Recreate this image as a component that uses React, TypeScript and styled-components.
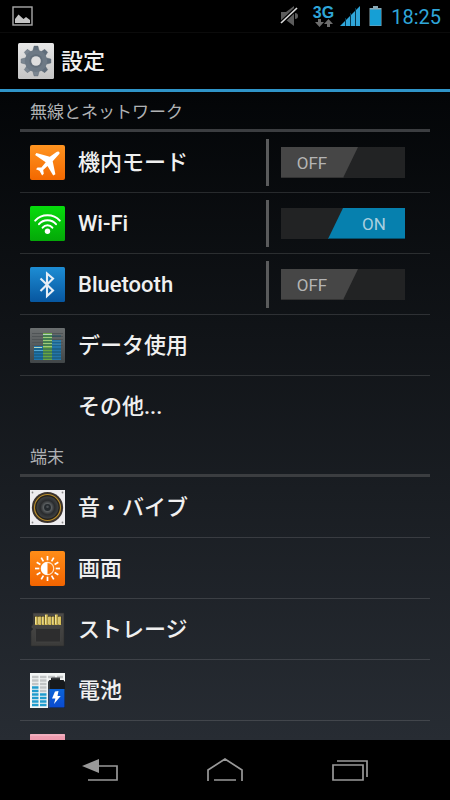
import React, { useState } from "react";
import styled, { createGlobalStyle } from "styled-components";

const BLUE = "#2fa6d9";

const GlobalStyle = createGlobalStyle`
  *, *::before, *::after { box-sizing: border-box; }
  body {
    margin: 0;
    background: #000;
    color: #f0f0f0;
    font-family: Roboto, "Noto Sans CJK JP", sans-serif;
  }
`;

const Screen = styled.div`
  display: flex;
  flex-direction: column;
  height: 100vh;
  overflow: hidden;
  background: linear-gradient(#000, #030507 90px, #272c33 740px);
`;

const StatusBar = styled.div`
  display: flex;
  flex: none;
  align-items: center;
  justify-content: space-between;
  height: 32px;
  padding: 0 9px 0 12px;
  background: #000;
`;

const StatusIcons = styled.div`
  display: flex;
  align-items: center;
`;

const StatusIcon = styled.svg<{ $gap?: number }>`
  display: block;
  margin-right: ${(p) => p.$gap ?? 0}px;
`;

const Network = styled.div`
  display: flex;
  flex-direction: column;
  align-items: center;
  margin-right: 6px;
  color: ${BLUE};
  font: bold 16px/13px "Liberation Sans", sans-serif;
`;

const Clock = styled.time`
  color: ${BLUE};
  font-size: 20px;
  line-height: 32px;
  padding-top: 1px;
`;

const Header = styled.header`
  display: flex;
  flex: none;
  align-items: center;
  gap: 7px;
  height: 60px;
  padding: 0 18px;
  background: #000;
  border-top: 1px solid #0b0b0b;
  border-bottom: 3px solid #2f94c8;
`;

const Title = styled.h1`
  margin: 0;
  padding-top: 2px;
  font-size: 22px;
  font-weight: 500;
  line-height: 32px;
`;

const List = styled.main`
  flex: 1;
  min-height: 0;
  overflow: hidden;
  padding: 0 20px;
`;

const SectionTitle = styled.h2`
  height: 40px;
  margin: 0;
  padding-left: 10px;
  border-bottom: 3px solid #3b3d40;
  color: #b0b2b4;
  font-size: 17px;
  font-weight: 400;
  line-height: 41px;
`;

const Row = styled.div`
  display: flex;
  align-items: center;
  height: 61px;
  padding: 1px 25px 0 10px;
  border-bottom: 1px solid rgba(255, 255, 255, 0.13);

  &:last-child { border-bottom-color: transparent; }
`;

const IconSlot = styled.div`
  flex: none;
  width: 35px;
  height: 35px;
  margin-right: 13px;

  svg { display: block; }
`;

const Label = styled.span`
  flex: 1;
  font-size: 22px;
  font-weight: 500;
  line-height: 32px;
  white-space: nowrap;
`;

const ToggleArea = styled.div`
  display: flex;
  flex: none;
  align-items: center;
  height: 47px;
  padding-left: 12px;
  border-left: 3px solid #5a5b5c;
`;

const Track = styled.button`
  display: block;
  width: 124px;
  height: 31px;
  padding: 0;
  border: 0;
  background: #222324;
  cursor: pointer;
`;

const Thumb = styled.span<{ $on: boolean }>`
  display: block;
  width: 77px;
  height: 31px;
  margin-left: ${(p) => (p.$on ? "auto" : "0")};
  padding: ${(p) => (p.$on ? "0 0 0 15px" : "0 15px 0 0")};
  border-bottom: 1px solid ${(p) => (p.$on ? "#05506d" : "#333")};
  background: ${(p) => (p.$on ? "#0680ae" : "#464646")};
  clip-path: ${(p) =>
    p.$on
      ? "polygon(15px 0, 100% 0, 100% 100%, 0 100%)"
      : "polygon(0 0, 100% 0, 62px 100%, 0 100%)"};
  color: ${(p) => (p.$on ? "#a9cfdf" : "#b4b4b4")};
  font: 17px/32px Roboto, sans-serif;
  text-align: center;
`;

const NavBar = styled.nav`
  display: flex;
  flex: none;
  justify-content: center;
  height: 60px;
  background: #000;
`;

const NavButton = styled.button`
  display: flex;
  align-items: center;
  justify-content: center;
  flex: 0 1 125px;
  padding: 0;
  border: 0;
  background: none;
  cursor: pointer;
`;

function AppIcon({ children, size = 35 }: { children: React.ReactNode; size?: number }) {
  return (
    <svg width={size} height={size} viewBox="0 0 35 35" aria-hidden="true">
      {children}
    </svg>
  );
}

function Gradient({ id, from, to }: { id: string; from: string; to: string }) {
  return (
    <defs>
      <linearGradient id={id} x1="0" y1="0" x2="0" y2="1">
        <stop offset="0" stopColor={from} />
        <stop offset="1" stopColor={to} />
      </linearGradient>
    </defs>
  );
}

const GearIcon = () => (
  <AppIcon size={36}>
    <Gradient id="gearBg" from="#e8e8e8" to="#c4c4c4" />
    <Gradient id="gearFg" from="#5d6b79" to="#7d8893" />
    <rect width="35" height="35" rx="1.5" fill="url(#gearBg)" />
    <g fill="url(#gearFg)" stroke="#56616c" strokeWidth=".4">
      {[0, 45, 90, 135].map((a) => (
        <path
          key={a}
          transform={`rotate(${a} 17.5 17.5)`}
          d={a % 90 === 0
            ? "M15.6 3h3.8l1.3 5v19l-1.3 5h-3.8l-1.3-5V8z"
            : "M15.5 3.5h4l1 4.500v19l-1 4.500h-4l-1-4.500V8z"}
        />
      ))}
    </g>
    <circle cx="17.5" cy="17.5" r="10.8" fill="#6d7985" />
    <circle cx="17.5" cy="17.5" r="6.5" fill="#626e7a" />
    <circle cx="17.5" cy="17.5" r="4.7" fill="#dedede" />
  </AppIcon>
);

const AirplaneIcon = () => (
  <AppIcon>
    <Gradient id="plane" from="#ff9420" to="#f36800" />
    <rect width="35" height="35" rx="2" fill="url(#plane)" />
    <path
      fill="#fff"
      d="M28.800 6.700c1 .5 1 1.700.2 2.600l-6.300 6.900 2.700 13-2.200 1.200-5.700-9.400-4.300 4.100.6 3.700-1.700 1.700-2.600-4.800-3.500-1.500 1.500-1.800 3.900.1 4.300-5.200L5.100 10l1.300-2.100 13.400 3.800 6.700-4.700c.8-.6 1.600-.7 2.300-.3z"
    />
  </AppIcon>
);

const WifiIcon = () => (
  <AppIcon>
    <Gradient id="wifi" from="#06dc0c" to="#04a808" />
    <rect width="35" height="35" rx="1.5" fill="url(#wifi)" />
    <g fill="none" stroke="#fff" strokeWidth="2" strokeLinecap="round">
      <path d="M5.200 14.6C11.5 7.600 23.5 7.600 29.800 14.6" />
      <path d="M9 18.2C13.200 13 21.800 13 26 18.2" />
      <path d="M12.6 21.6C15.2 18.3 19.8 18.3 22.4 21.6" />
    </g>
    <circle cx="17.5" cy="25.3" r="2.7" fill="#fff" />
  </AppIcon>
);

const BluetoothIcon = () => (
  <AppIcon>
    <Gradient id="bt" from="#1d8dd4" to="#07569f" />
    <rect width="35" height="35" rx="1.5" fill="url(#bt)" />
    <path d="M10.5 11.5 23 23.5l-6 5.5V6.5l6 5L10.5 24" fill="none" stroke="#e6eef6" strokeWidth="2.1" />
  </AppIcon>
);

const DataIcon = () => (
  <AppIcon>
    <Gradient id="data" from="#6b6f70" to="#414648" />
    <rect width="35" height="35" rx="1" fill="url(#data)" />
    <path d="M2 5.5h31M2 8.5h31M2 11.5h31M2 14.5h31M2 17.5h31" stroke="#4f5456" strokeWidth="1" />
    <rect x="4" y="18" width="9" height="14" fill="#1d73ad" />
    <rect x="13" y="5" width="9" height="27" fill="#69a642" />
    <rect x="22" y="12" width="9" height="20" fill="#2475a9" />
    <path d="M4 19.5h8M13 6.5h9" stroke="#b4d5bb" />
    <path d="M22 13.5h9M4 22.5h9M22 16.5h9" stroke="#56a8d3" />
    <path d="M13 9.5h9M13 12.5h9M13 15.5h9M13 18.5h9" stroke="#9fca78" />
    <path d="M4 21h27M4 24h27M4 27h27M4 30h27M13 8h18M13 11h9M13 14h18M13 17h18" stroke="#174e65" strokeWidth=".9" />
  </AppIcon>
);

const SpeakerIcon = () => (
  <AppIcon>
    <defs>
      <radialGradient id="cone">
        <stop offset="0" stopColor="#171b1e" />
        <stop offset=".35" stopColor="#5d6163" />
        <stop offset=".65" stopColor="#292b2d" />
        <stop offset="1" stopColor="#3f4244" />
      </radialGradient>
    </defs>
    <rect width="35" height="35" fill="#eeedf0" />
    <circle cx="17.5" cy="17.5" r="15.600" fill="#3b332e" />
    <circle cx="17.5" cy="17.5" r="13" fill="#25211c" stroke="#b58b2b" strokeWidth="1.200" />
    <circle cx="17.5" cy="17.5" r="11" fill="url(#cone)" />
    <circle cx="17.5" cy="17.5" r="3.4" fill="#252a2e" />
    <circle cx="17.5" cy="16.8" r="1.3" fill="#4c5054" />
    <g fill="#888">
      <circle cx="2.5" cy="2.5" r=".9" />
      <circle cx="32.5" cy="2.5" r=".9" />
      <circle cx="2.5" cy="32.5" r=".9" />
      <circle cx="32.5" cy="32.5" r=".9" />
    </g>
  </AppIcon>
);

const BrightnessIcon = () => (
  <AppIcon>
    <Gradient id="sun" from="#ff8d18" to="#f26400" />
    <rect width="35" height="35" rx="2" fill="url(#sun)" />
    <circle cx="17.5" cy="17.5" r="6.2" fill="none" stroke="#ffe1c2" strokeWidth="1.2" />
    <path d="M17.5 11a6.5 6.5 0 0 0 0 13z" fill="#fff" />
    {Array.from({ length: 12 }, (_, i) => (
      <path key={i} d="M17.5 5v4.3" transform={`rotate(${i * 30} 17.5 17.5)`} stroke="#fff" strokeWidth="1.7" />
    ))}
  </AppIcon>
);

const StorageIcon = () => (
  <AppIcon>
    <Gradient id="sd" from="#4c4b49" to="#3b3b3a" />
    <path d="M3 1h31v33H1V19l2-2-2-2 2-3z" fill="url(#sd)" stroke="#2b2b2b" strokeWidth=".6" />
    <path d="M4.5 4h27v8h-27z" fill="#2f2b21" />
    <g fill="#d4bb55">
      <path d="M5 4.5h2.7V13H5zM8.3 4.5H11V13H8.3zM11.7 4.5h2.7V13h-2.7zM15 2.5h2.7V13H15zM18.3 4.5H21V13h-2.7zM21.7 4.5h2.7V13h-2.7zM25 2.5h2.7V13H25zM28.3 4.5H31V13h-2.7z" />
    </g>
    <path d="M5.5 5v7M8.8 5v7M12.2 5v7M15.5 3v9M18.8 5v7M22.2 5v7M25.5 3v9M28.8 5v7" stroke="#f2e7a2" strokeWidth=".9" />
    <rect x="5.5" y="16.5" width="25" height="13.5" rx="1" fill="#2d2d2e" stroke="#454544" strokeWidth=".8" />
  </AppIcon>
);

const BatteryIcon = () => (
  <AppIcon>
    <Gradient id="cell" from="#0b64d8" to="#0a4ad0" />
    <rect width="35" height="35" fill="#f3f5f5" />
    <path d="M2 4h6.5M10 4h6.5M18 4h7M27 4h6M2 7.5h6.5M10 7.5h6.5M2 11h6.5M10 11h6.5M10 14.5h6.5M10 18h6.5" stroke="#c2c5c6" strokeWidth="2.4" />
    <path d="M2 14.5h6.5M2 18h6.5M2 21.5h6.5M10 21.5h6.5M2 25h6.5M10 25h6.5M2 28.5h6.5M10 28.5h6.5M2 32h6.5M10 32h6.5" stroke="#219ccd" strokeWidth="2.6" />
    <path d="M21 7V5h9v2h3.5l1.5 2v26H18V9l1.5-2z" fill="#171a1d" />
    <rect x="21.5" y="4.5" width="8.5" height="2" fill="#383b3e" />
    <rect x="18.5" y="16" width="16" height="18.5" fill="url(#cell)" />
    <path d="M19 8.5v26" stroke="#50565f" strokeWidth="1" />
    <path d="m25 18.5 3.5-.5-1 5h3.2L24 31l1.4-5.5H22z" fill="#fff" />
  </AppIcon>
);

const AppsIcon = () => (
  <AppIcon>
    <Gradient id="apps" from="#f0a0b3" to="#e17891" />
    <rect width="35" height="35" rx="1" fill="url(#apps)" />
    <path d="M0 1h35" stroke="#f5bdc9" strokeWidth="1" />
  </AppIcon>
);

function Toggle({ label, initial }: { label: string; initial: boolean }) {
  const [on, setOn] = useState(initial);
  return (
    <ToggleArea>
      <Track type="button" role="switch" aria-checked={on} aria-labelledby={label} onClick={() => setOn(!on)}>
        <Thumb $on={on}>{on ? "ON" : "OFF"}</Thumb>
      </Track>
    </ToggleArea>
  );
}

type Item = { id: string; name: string; Icon?: () => React.ReactNode; on?: boolean };

const sections: { title: string; items: Item[] }[] = [
  {
    title: "無線とネットワーク",
    items: [
      { id: "airplane", name: "機内モード", Icon: AirplaneIcon, on: false },
      { id: "wi-fi", name: "Wi-Fi", Icon: WifiIcon, on: true },
      { id: "bluetooth", name: "Bluetooth", Icon: BluetoothIcon, on: false },
      { id: "data-usage", name: "データ使用", Icon: DataIcon },
      { id: "more", name: "その他..." },
    ],
  },
  {
    title: "端末",
    items: [
      { id: "sound", name: "音・バイブ", Icon: SpeakerIcon },
      { id: "display", name: "画面", Icon: BrightnessIcon },
      { id: "storage", name: "ストレージ", Icon: StorageIcon },
      { id: "battery", name: "電池", Icon: BatteryIcon },
      { id: "applications", name: "アプリ", Icon: AppsIcon },
    ],
  },
];

export default function App() {
  return (
    <Screen>
      <GlobalStyle />
      <StatusBar>
        <StatusIcon width="21" height="20" viewBox="0 0 21 20" aria-hidden="true">
          <rect x="1" y="1" width="19" height="18" fill="none" stroke="#a9a9a9" strokeWidth="1.4" />
          <path d="M3 17v-4l3.500-4.500 3 2.800 2 1.700 2.500-2 4 3V17z" fill="#c4c4c4" />
        </StatusIcon>
        <StatusIcons>
          <StatusIcon $gap={14} width="19" height="20" viewBox="0 0 19 20" aria-hidden="true">
            <path d="M1 6h5l8-6v20l-8-6H1zM15 7q3 0 3 3t-3 3z" fill="#5c5c5c" />
            <path d="M1 17 17 2" stroke="#000" strokeWidth="4" />
            <path d="M1 17 17 2" stroke="#dcdcdc" strokeWidth="1.7" />
          </StatusIcon>
          <Network>
            3G
            <StatusIcon width="18" height="8" viewBox="0 0 18 8" aria-hidden="true">
              <path d="M3 0h3v3h3L4.500 8 0 3h3zM12 8h3V5h3l-4.500-5L9 5h3z" fill="#6e6e6e" />
            </StatusIcon>
          </Network>
          <StatusIcon $gap={9} width="20" height="20" viewBox="0 0 20 20" aria-hidden="true">
            <path d="M0 20 20 0v20z" fill={BLUE} />
            <path d="M5.500 12v8M10.500 7v13M15.500 2v18" stroke="#06364d" strokeWidth="1" />
          </StatusIcon>
          <StatusIcon $gap={9} width="13" height="20" viewBox="0 0 13 20" aria-hidden="true">
            <path d="M4 0h5v2h3.500v18H.5V2H4z" fill="#8aa9b6" />
            <rect x="1" y="3.500" width="11" height="16" fill="#169fd5" />
          </StatusIcon>
          <Clock dateTime="18:25">18:25</Clock>
        </StatusIcons>
      </StatusBar>

      <Header>
        <GearIcon />
        <Title>設定</Title>
      </Header>

      <List>
        {sections.map((section) => (
          <section key={section.title}>
            <SectionTitle>{section.title}</SectionTitle>
            {section.items.map(({ id, name, Icon, on }) => (
              <Row key={id}>
                <IconSlot>{Icon && <Icon />}</IconSlot>
                <Label id={id}>{name}</Label>
                {on !== undefined && <Toggle label={id} initial={on} />}
              </Row>
            ))}
          </section>
        ))}
      </List>

      <NavBar>
        <NavButton type="button" aria-label="戻る">
          <svg width="38" height="24" viewBox="0 0 38 24" fill="none" stroke="#999" strokeWidth="1.700">
            <path d="M18 8h18v14H7" />
            <path d="M1 8 18 1v14z" fill="#999" stroke="none" />
          </svg>
        </NavButton>
        <NavButton type="button" aria-label="ホーム">
          <svg width="38" height="24" viewBox="0 0 38 24" fill="none" stroke="#999" strokeWidth="1.700">
            <path d="M2 23V12L19 1l17 11v11M8 22h22" />
          </svg>
        </NavButton>
        <NavButton type="button" aria-label="最近使ったアプリ">
          <svg width="38" height="24" viewBox="0 0 38 24" fill="none" stroke="#999" strokeWidth="1.700">
            <path d="M2 7h30v15H2zM6 3h30v16" />
          </svg>
        </NavButton>
      </NavBar>
    </Screen>
  );
}
